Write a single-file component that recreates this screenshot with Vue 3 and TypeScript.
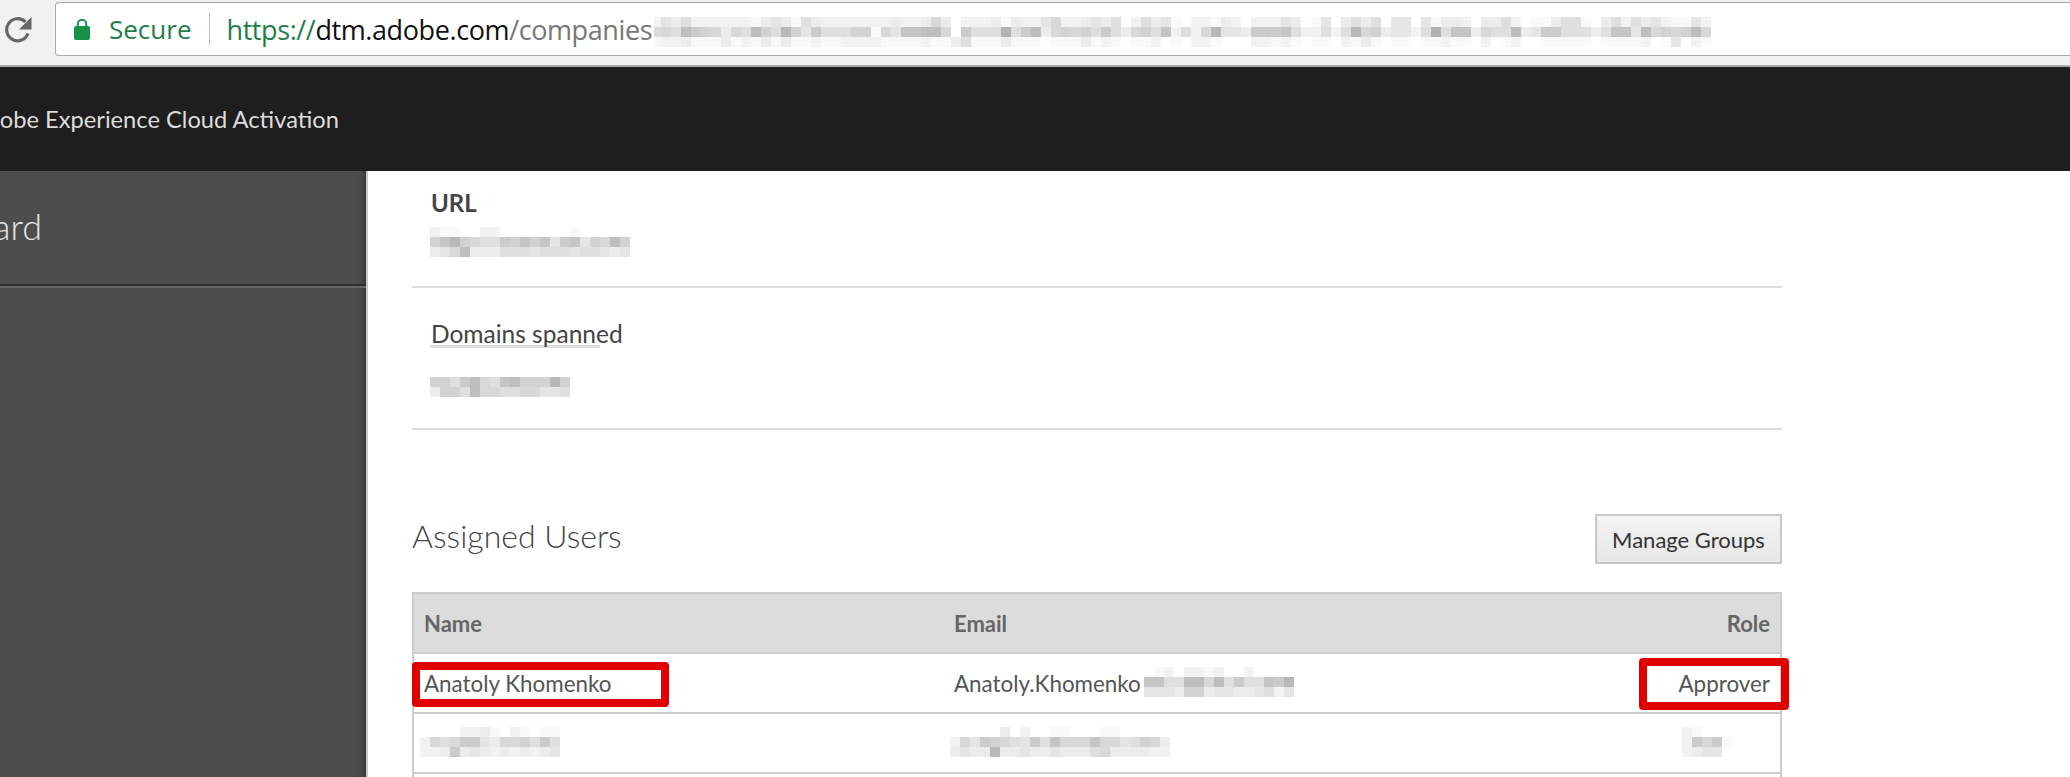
<script setup lang="ts">
const shades = '0123456789abcdef'
function shade(ch: string): string {
  const v = shades.indexOf(ch)
  if (v <= 0) return 'transparent'
  const g = 255 - v * 6.5
  return `rgb(${g},${g},${g})`
}
function cells(rows: string[]) {
  return rows.map((r) => r.split('').map((c) => shade(c)))
}
const urlBlur = cells([
  '435222222134315322222223223630222313224' + '6223435025341022132022243014035350440413' + '32033520113551035253421142',
  '65a876365a75b7485557716499aa608555c58a3' + '6767585367592526b4438889522525b6734425c5' + '993655a34885553' + '5994a6767a6',
  '223111312131311211222211112113511131110' + '1113121011201022100022121011021310110112' + '11020120011111011112014021'
])
const siteBlur = cells(['21100220000000100000', '79b765587979489476a7', '346a3335554555455434'])
const domainBlur = cells(['7758a659a777b7', '3775a665566445'])
const selfBlur = cells(['0120221200200000', '9955aa6a585598b0', '4443773443345240'])
const nameBlur = cells(['00002231021011', '26568843667585', '22383432323234'])
const emailBlur = cells(['0000030200110001100000', '2648765485966696645763', '3433b33433433356333322'])
const roleBlur = cells(['21000', '28681', '23440'])
</script>

<template>
  <div class="page">
    <div class="toolbar">
      <svg class="reload" width="28" height="26" viewBox="0 0 28 26"><path d="M24 16.500A11 11 0 1 1 21.500 5" fill="none" stroke="#666" stroke-width="3.200"/><path d="M27.500 0v12.500H15z" fill="#666"/></svg>
      <div class="omnibox">
        <svg class="lock" width="16" height="22" viewBox="0 0 16 22"><path d="M3.800 9V6a4.200 4.200 0 0 1 8.400 0v3" fill="none" stroke="#17904a" stroke-width="2"/><rect x="0" y="8" width="16" height="14" rx="2" fill="#17904a"/></svg>
        <span class="secure">Secure</span>
        <span class="divider"></span>
        <span class="url"><span class="scheme">https://</span><span class="host">dtm.adobe.com</span><span class="path">/companies</span></span>
        <div class="url-lead"></div>
        <div class="mosaic url-blur">
          <div v-for="(row, i) in urlBlur" :key="i" class="mrow">
            <i v-for="(c, j) in row" :key="j" :style="{ background: c }"></i>
          </div>
        </div>
      </div>
    </div>
    <header class="brandbar">
      <div class="brand-clip"><span class="brand">Adobe Experience Cloud Activation</span></div>
    </header>
    <div class="body">
      <aside class="sidebar">
        <div class="nav-item"><div class="nav-clip"><span class="nav-text">Dashboard</span></div></div>
      </aside>
      <main class="main">
        <section class="field url-field">
          <h4 class="label strong">URL</h4>
          <div class="mosaic shift">
            <div v-for="(row, i) in siteBlur" :key="i" class="mrow">
              <i v-for="(c, j) in row" :key="j" :style="{ background: c }"></i>
            </div>
          </div>
        </section>
        <section class="field domain-field">
          <h4 class="label">Domains spanned</h4>
          <div class="underline"></div>
          <div class="mosaic shift">
            <div v-for="(row, i) in domainBlur" :key="i" class="mrow">
              <i v-for="(c, j) in row" :key="j" :style="{ background: c }"></i>
            </div>
          </div>
        </section>
        <div class="users-head">
          <h2 class="users-title">Assigned Users</h2>
          <button class="manage">Manage Groups</button>
        </div>
        <div class="table">
          <div class="tr th">
            <span class="c-name">Name</span><span class="c-email">Email</span><span class="c-role">Role</span>
          </div>
          <div class="tr">
            <span class="c-name">Anatoly Khomenko</span>
            <span class="c-email email-cell"><span>Anatoly.Khomenko</span>
              <span class="mosaic self">
                <span v-for="(row, i) in selfBlur" :key="i" class="mrow">
                  <i v-for="(c, j) in row" :key="j" :style="{ background: c }"></i>
                </span>
              </span>
            </span>
            <span class="c-role">Approver</span>
            <span class="mark mark-name"></span>
            <span class="mark mark-role"></span>
          </div>
          <div class="tr">
            <span class="c-name"><span class="mosaic name-blur">
              <span v-for="(row, i) in nameBlur" :key="i" class="mrow"><i v-for="(c, j) in row" :key="j" :style="{ background: c }"></i></span>
            </span></span>
            <span class="c-email"><span class="mosaic email-blur">
              <span v-for="(row, i) in emailBlur" :key="i" class="mrow"><i v-for="(c, j) in row" :key="j" :style="{ background: c }"></i></span>
            </span></span>
            <span class="c-role"><span class="mosaic role-blur">
              <span v-for="(row, i) in roleBlur" :key="i" class="mrow"><i v-for="(c, j) in row" :key="j" :style="{ background: c }"></i></span>
            </span></span>
          </div>
          <div class="tr"></div>
        </div>
      </main>
    </div>
  </div>
</template>

<style>
html, body { margin: 0; background: #fff; }
</style>

<style scoped>
.page { width: 2070px; height: 777px; overflow: hidden; font-family: "Lato", "Noto Sans", sans-serif; display: flex; flex-direction: column; }
.toolbar { height: 67px; box-sizing: border-box; flex: none; background: #f1f1f1; border-bottom: 2px solid #aaa; display: flex; align-items: flex-start; padding: 2px 0 0 4px; gap: 23px; }
.reload { margin-top: 15px; flex: none; }
.omnibox { flex: 1; height: 54px; box-sizing: border-box; background: #fff; border: 1px solid #a9a9a9; border-right: none; border-radius: 4px 0 0 4px; display: flex; align-items: center; padding-left: 18px; font-family: "Open Sans", sans-serif; font-size: 27px; }
.lock { flex: none; }
.secure { color: #1e7e4a; margin-left: 19px; font-size: 26px; }
.divider { width: 1px; height: 32px; background: #bbb; margin: 0 16px 0 18px; }
.scheme { color: #1e7e4a; }
.host { color: #111; }
.path { color: #777; }
.url { letter-spacing: -0.4px; white-space: nowrap; width: 428px; flex: none; }
.url-lead { width: 7px; height: 30px; margin-top: 6px; flex: none; background: linear-gradient(#f4f4f4 33%, #dcdcdc 33% 66%, #f8f8f8 66%); }
.url-blur { margin-top: 6px; }
.mosaic { display: inline-flex; flex-direction: column; vertical-align: top; }
.mrow { display: flex; }
.mrow i { display: block; width: 10px; height: 10px; flex: none; }
.brandbar { height: 104px; flex: none; background: #1e1e1e; display: flex; align-items: center; }
.brand-clip { width: 339px; display: flex; justify-content: flex-end; }
.brand { color: #dcdcdc; font-size: 23.700px; white-space: nowrap; flex: none; }
.body { flex: 1; display: flex; min-height: 0; }
.sidebar { width: 368px; flex: none; background: #4d4d4d; box-shadow: inset -7px 0 6px -5px #333; border-right: 2px solid #c8c8c8; box-sizing: border-box; }
.nav-item { height: 115px; box-sizing: border-box; border-bottom: 2px solid #2e2e2e; box-shadow: 0 2px 0 #666; display: flex; align-items: center; }
.nav-clip { width: 42px; display: flex; justify-content: flex-end; margin-top: -3px; }
.nav-text { color: #e6e6e6; font-size: 36px; font-weight: 300; flex: none; }
.main { width: 1370px; margin-left: 44px; flex: none; }
.field { border-bottom: 2px solid #ddd; box-sizing: border-box; padding-left: 19px; }
.url-field { height: 117px; }
.domain-field { height: 142px; }
.shift { margin-left: -1px; }
.label { margin: 0; font-size: 24.500px; font-weight: 400; color: #444; line-height: 27px; }
.strong { font-weight: 700; font-size: 24px; padding-top: 18px; margin-bottom: 11px; }
.domain-field .label { padding-top: 32px; }
.underline { width: 170px; height: 3px; background: #ddd; margin: -2px 0 29px -1px; }
.users-head { display: flex; justify-content: space-between; align-items: center; margin-top: 84px; height: 50px; }
.users-title { margin: 0 0 7px; font-size: 32px; font-weight: 300; color: #444; }
.manage { width: 187px; height: 50px; background: linear-gradient(#f4f4f4, #e6e6e6); border: 2px solid #c8c8c8; font: 22px "Lato", sans-serif; color: #333; padding: 0; }
.table { margin-top: 28px; border: 2px solid #ccc; border-bottom: none; }
.tr { position: relative; display: flex; align-items: center; height: 60px; box-sizing: border-box; border-bottom: 2px solid #ccc; padding: 0 10px; font-size: 22.400px; color: #555; }
.th { background: #dcdcdc; font-weight: 700; color: #666; font-size: 22px; }
.c-name { width: 530px; flex: none; white-space: nowrap; display: flex; }
.c-email { flex: 1; white-space: nowrap; display: flex; align-items: center; }
.c-role { width: 200px; flex: none; display: flex; justify-content: flex-end; }
.self { margin: -2px 0 0 3px; }
.name-blur { margin: -2px 0 0 -4px; }
.email-blur { margin: -2px 0 0 -4px; }
.role-blur { margin: -2px 38px 0 0; }
.mark { position: absolute; border: 8px solid #e10000; border-radius: 4px; box-sizing: border-box; }
.mark-name { left: -2px; top: 8px; width: 257px; height: 45px; }
.mark-role { right: -9px; top: 4px; width: 150px; height: 52px; }
</style>
